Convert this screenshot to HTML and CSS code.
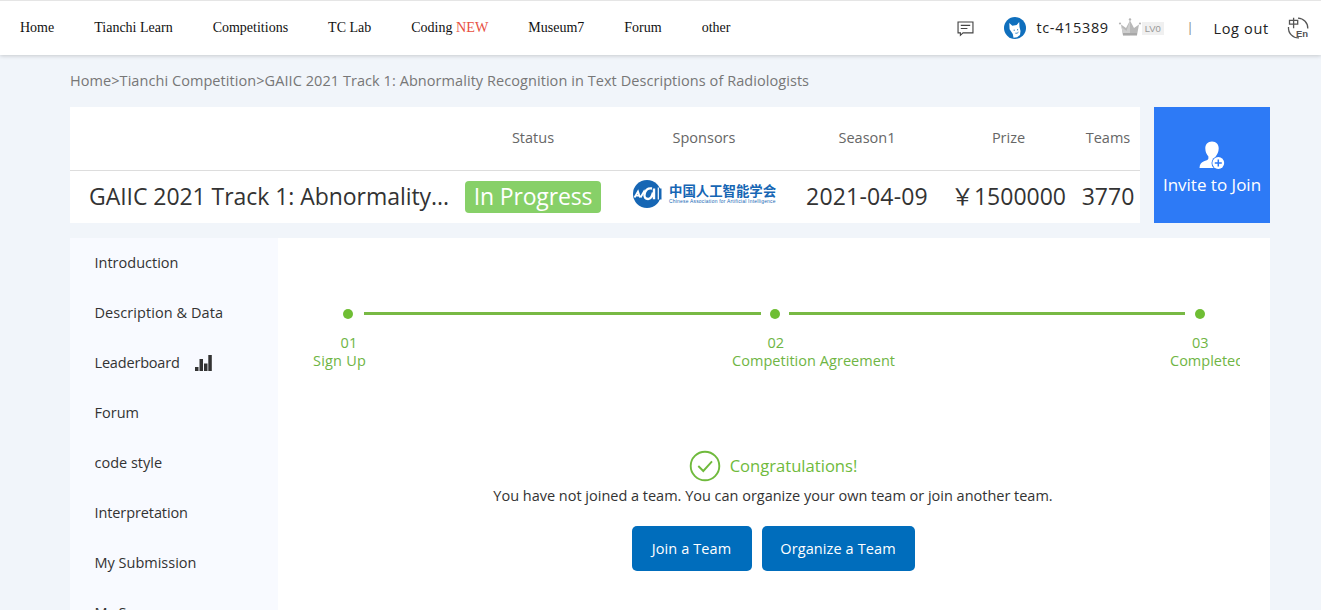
FILE: index.html
```
<!DOCTYPE html>
<html lang="en">
<head>
<meta charset="utf-8">
<title>Tianchi Competition</title>
<link rel="stylesheet" href="styles.css">
</head>
<body>
<header class="topbar">
  <nav class="nav">
    <a>Home</a><a>Tianchi Learn</a><a>Competitions</a><a>TC Lab</a><a>Coding <span class="new">NEW</span></a><a>Museum7</a><a>Forum</a><a>other</a>
  </nav>
  <div class="user">
    <svg class="msg" width="17" height="17" viewBox="0 0 18 18" fill="none" stroke="#444" stroke-width="1.2"><path d="M1.1 2.1h15.800v11.600H6.400L3.600 16.200v-2.500H1.100zM4 5.700h10M4 9h7"/></svg>
    <svg class="avatar" width="22" height="22" viewBox="0 0 22 22"><circle cx="11" cy="11" r="11" fill="#0f6fbd"/><path d="M5.300 6 8.300 8.800l4.400-.9 2.500-3 .3 5.200 1 4-.5 3.900-2.900 2.300-3.600.5-.7-3.800-3.200-4.800z" fill="#fff"/><path d="M10.200 12.600v1.400M13.600 12v1.400M11.300 16.200q2 .6 3.200-1.100" fill="none" stroke="#0f6fbd" stroke-width=".8"/></svg>
    <span class="name">tc-415389</span>
    <span class="level"><svg width="24" height="20" viewBox="0 0 24 20"><path d="M3 6.500 8 10l4-7.500L16 10l5-3.500-2 10.800H5z" fill="#b9b9b9"/><path d="M12 2.500V17.300H5L3.600 9 8.500 13z" fill="#cecece"/><path d="M5 15h14v2.400H5z" fill="#a8a8a8"/><g fill="#b5b5b5"><circle cx="12" cy="1.500" r="1.200"/><circle cx="2" cy="5.500" r="1.100"/><circle cx="22" cy="5.500" r="1.100"/></g></svg><span class="lv">LV0</span></span>
    <span class="bar">|</span>
    <span class="logout">Log out</span>
    <svg class="lang" width="24" height="24" viewBox="0 0 24 24" fill="none" stroke="#555" stroke-width="1.300"><path d="M12 2.100A10 10 0 0 1 21.800 12.500M2.500 11A10 10 0 0 0 13 21.900M3.500 4.300h8.200v3.900H3.500zM7.600 1.800v10.400"/><text x="10" y="20.500" class="en">En</text></svg>
  </div>
</header>
<main class="page">
  <div class="crumb">Home&gt;Tianchi Competition&gt;GAIIC 2021 Track 1: Abnormality Recognition in Text Descriptions of Radiologists</div>
  <div class="summary">
    <div class="table">
      <div class="row head"><span></span><span>Status</span><span>Sponsors</span><span>Season1</span><span>Prize</span><span>Teams</span></div>
      <div class="row vals">
        <span class="title">GAIIC 2021 Track 1: Abnormality...</span>
        <span class="badge">In Progress</span>
        <span class="sponsor"><svg width="30" height="30" viewBox="0 0 30 30"><circle cx="15" cy="15" r="14" fill="#1666b4"/><path d="M24 9.500h5.500v11H24z" fill="#1666b4"/><g fill="none" stroke="#fff"><path d="M2.500 18.500 6 12.500 8 18.500M4 16.700h3.500M8.500 18.500 12 12.500l1 3" stroke-width="1.800"/><path d="M20 9.500q-5.500-1-7.500 5-.8 5.800 4.200 5.400 3-.6 4.300-6.400M22 9.500v10.800" stroke-width="2.400"/><path d="M26.300 8.500v12" stroke-width="1.200"/></g></svg><span class="org"><span class="zh">中国人工智能学会</span><span class="sub">Chinese Association for Artificial Intelligence</span></span></span>
        <span class="date">2021-04-09</span><span>￥1500000</span><span>3770</span>
      </div>
    </div>
    <a class="invite"><svg width="28" height="30" viewBox="0 0 28 30"><path d="M14 1.600c4.300 0 6.800 3 6.700 7-.1 3.400-1.400 6-3 7.800v2.200l7 4V28H1.500c.2-4 1.500-5.600 4-6.600 2.500-.9 4.700-1.300 4.900-2.800v-2.100C8.600 14.500 7.400 12 7.300 8.600 7.200 4.600 9.700 1.600 14 1.600z" fill="#fff"/><circle cx="20.300" cy="23" r="6.800" fill="#2d7af6"/><circle cx="20.300" cy="23" r="5.900" fill="#fff"/><path d="M20.300 19.500v7M16.800 23h7" stroke="#2d7af6" stroke-width="1.500"/></svg><span>Invite to Join</span></a>
  </div>
  <div class="content">
    <aside class="side">
      <a>Introduction</a><a class="desc">Description &amp; Data</a>
      <a class="leader">Leaderboard<svg class="chart" width="17" height="16" viewBox="0 0 17 16" fill="#333"><path d="M0 12h3.500v4H0zM4.500 4H8v12H4.500zM9 8.500h3.500V16H9zM13.300 0h3.500v16h-3.500z"/></svg></a>
      <a>Forum</a><a>code style</a><a class="interp">Interpretation</a><a>My Submission</a><a>My Score</a>
    </aside>
    <section class="main">
      <div class="steps"><i class="dot"></i><i class="line"></i><i class="dot"></i><i class="line second"></i><i class="dot"></i></div>
      <div class="labels">
        <div class="step first"><span class="num">01</span><span>Sign Up</span></div>
        <div class="step mid"><span class="num">02</span><span>Competition Agreement</span></div>
        <div class="step last"><span class="num">03</span><span>Completed</span></div>
      </div>
      <div class="result">
        <div class="congrats"><svg width="32" height="32" viewBox="0 0 32 32" fill="none" stroke="#6fba3c" stroke-width="1.900"><circle cx="16" cy="16" r="14.300"/><path d="m9.300 16 5 5 8.700-9.600"/></svg><span>Congratulations!</span></div>
        <p class="note">You have not joined a team. You can organize your own team or join another team.</p>
        <div class="buttons"><button class="join">Join a Team</button><button class="organize">Organize a Team</button></div>
      </div>
    </section>
  </div>
</main>
</body>
</html>
```

FILE: styles.css
```
* { box-sizing: border-box; }
body {
  margin: 0; height: 610px; overflow: hidden;
  background: #f1f5fa; color: #333;
  font: 14.5px/20px "Open Sans", "Noto Sans CJK SC", sans-serif;
}
.topbar {
  display: flex; justify-content: space-between; height: 55px;
  border-top: 1px solid #e5e5e5; background: #fff;
  box-shadow: 0 1px 4px rgba(0, 0, 0, .18);
  position: relative;
}
.nav {
  display: flex; gap: 40px; padding: 17px 0 0 20px;
  font: 14px/20px "Liberation Serif", serif; color: #111;
}
.new { color: #e8503f; font-size: 14.200px; line-height: 1; }
.user { display: flex; align-items: center; padding-right: 11px; color: #222; }
.avatar { margin-left: 30px; }
.name { margin-left: 10px; letter-spacing: .65px; }
.level { display: flex; align-items: center; margin-left: 9px; }
.lv { width: 22px; height: 13px; background: #f0f0f0; color: #999; font: 9.500px/14px "Liberation Sans", sans-serif; text-align: center; }
.bar { margin-left: 23px; color: #777; font-size: 12px; }
.logout { margin-left: 20px; letter-spacing: .7px; padding-top: 1px; }
.lang { margin-left: 17px; }
.en { font: bold 9.500px "Liberation Sans", sans-serif; fill: #555; stroke: none; }
.page { width: 1200px; margin: 0 0 0 70px; }
.crumb { height: 52px; padding-top: 16px; color: #777; letter-spacing: .064px; }
.summary { display: flex; gap: 14px; }
.table { width: 1070px; height: 116px; background: #fff; }
.row { display: grid; grid-template-columns: 381px 164px 178px 148px 135px 64px; align-items: center; text-align: center; white-space: nowrap; }
.head { height: 64px; padding-bottom: 2px; border-bottom: 1px solid #ddd; color: #666; }
.vals { height: 52px; font-size: 23px; line-height: 30px; }
.vals > span { padding-bottom: 2px; }
.vals .title { padding-left: 19px; text-align: left; letter-spacing: -.05px; }
.vals .badge { width: 136px; height: 32px; justify-self: center; border-radius: 4px; background: #87d068; color: #fff; letter-spacing: -.16px; }
.date { letter-spacing: .18px; }
.vals .sponsor { display: flex; align-items: center; justify-content: center; gap: 7px; padding-bottom: 6px; color: #1666b4; }
.org { display: flex; flex-direction: column; width: 107px; text-align: left; }
.zh { font: bold 13.400px/15px "Noto Sans CJK SC", sans-serif; }
.sub { font: 4.900px/7px "Liberation Sans", sans-serif; letter-spacing: .24px; }
.invite { display: flex; flex-direction: column; align-items: center; gap: 5px; width: 116px; height: 116px; padding-top: 33px; background: #2d7af6; color: #fff; font-size: 17px; white-space: nowrap; }
.content { display: flex; margin-top: 15px; height: 400px; }
.side { width: 208px; background: #f8faff; }
.side a { display: flex; align-items: center; height: 50px; padding-left: 24.500px; }
.side .desc { letter-spacing: .07px; }
.side .leader { letter-spacing: -.18px; }
.side .interp { letter-spacing: -.1px; }
.chart { margin: -1px 0 0 15px; }
.main { width: 992px; background: #fff; padding: 71px 30px 0 35px; }
.steps { display: flex; align-items: center; height: 10px; padding: 0 35px 0 30px; }
.dot { width: 10px; height: 10px; border-radius: 50%; background: #6fbe34; }
.line { flex: 0 0 397px; height: 3px; margin: 0 9px 1px 11px; background: #78b944; }
.second { flex: 1; margin: 0 10px 1px 9px; }
.labels { display: flex; height: 54px; padding-top: 15px; line-height: 18px; color: #6fb544; }
.step { display: flex; flex-direction: column; white-space: nowrap; }
.first { width: 419px; letter-spacing: .2px; }
.first .num { padding-left: 27.500px; }
.mid { letter-spacing: .04px; }
.mid .num { padding-left: 35.500px; }
.last { width: 70px; margin-left: auto; overflow: hidden; }
.last .num { padding-left: 22px; }
.result { width: 920px; margin-top: 77px; }
.congrats { display: flex; justify-content: center; align-items: center; gap: 9px; font-size: 16.600px; color: #6fba3c; }
.note { margin: 4px 0 20px; text-align: center; letter-spacing: -.01px; }
.buttons { display: flex; justify-content: center; gap: 10px; }
button { height: 45px; border: 0; border-radius: 5px; background: #006dbc; color: #fff; font: inherit; letter-spacing: .1px; padding: 0; }
.join { width: 120px; }
.organize { width: 153px; }
```
